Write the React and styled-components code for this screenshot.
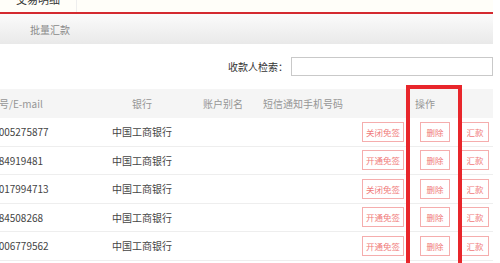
import React from 'react';
import styled, { createGlobalStyle } from 'styled-components';

const GlobalStyle = createGlobalStyle`
  html, body {
    margin: 0;
    padding: 0;
    background: #fff;
    font-family: "Noto Sans CJK SC", "Noto Sans", sans-serif;
  }
`;

const Screen = styled.div`
  position: relative;
  width: 500px;
  height: 263px;
  overflow: hidden;
  background: #fff;
`;

const Page = styled.div`
  margin: -15px 0 0 -28px;
  width: 521px;
`;

const TabRow = styled.div`
  display: flex;
  height: 27px;
  border-bottom: 2px solid #d42a30;
  background: #fffef9;
`;

const Tab = styled.div`
  width: 105px;
  padding-left: 28px;
  box-sizing: border-box;
  display: flex;
  align-items: center;
  justify-content: center;
  border-right: 1px solid #eee;
  font-size: 11px;
  color: #333;
`;

const SubBar = styled.div`
  height: 30px;
  display: flex;
  align-items: center;
  padding-left: 58px;
  background: linear-gradient(#fbfbfb, #e9e9e9);
  font-size: 10px;
  color: #8a8a8a;
`;

const SearchRow = styled.div`
  height: 45px;
  display: flex;
  align-items: center;
  justify-content: flex-end;
  gap: 3px;
`;

const SearchLabel = styled.span`
  font-size: 10px;
  color: #333;
`;

const SearchInput = styled.input`
  width: 202px;
  height: 19px;
  box-sizing: border-box;
  border: 1px solid #c9c9c9;
  padding: 0 4px;
  outline: none;
`;

const Grid = styled.div`
  display: grid;
  grid-template-columns: 128px 84px 78px 82px 149px;
`;

const Row = styled.div`
  display: contents;
`;

const Cell = styled.div`
  height: ${(p) => (p.$head ? '29px' : '28.5px')};
  box-sizing: border-box;
  display: flex;
  align-items: center;
  justify-content: ${(p) => (p.$left ? 'flex-start' : 'center')};
  padding-left: ${(p) => p.$pl || 0}px;
  white-space: nowrap;
  font-size: 10px;
  color: ${(p) => (p.$head ? '#959595' : '#444')};
  background: ${(p) => (p.$head ? '#f5f5f5' : '#fff')};
  border-bottom: ${(p) => (p.$head ? 'none' : '1px solid #eeeeee')};
`;

const Btn = styled.span`
  width: ${(p) => p.$w}px;
  height: 20px;
  margin-left: ${(p) => p.$ml || 0}px;
  box-sizing: border-box;
  display: inline-flex;
  align-items: center;
  justify-content: center;
  border: 1px solid #f5adad;
  color: #f07a7a;
  font-size: 8.5px;
  background: #fff;
`;

const Highlight = styled.div`
  position: absolute;
  left: 406px;
  top: 85px;
  width: 56px;
  height: 200px;
  box-sizing: border-box;
  border: 4px solid #e8262b;
  pointer-events: none;
`;

const rows = [
  { acct: '622005275877', free: '关闭免签' },
  { acct: '13584919481', free: '开通免签' },
  { acct: '622017994713', free: '关闭免签' },
  { acct: '13584508268', free: '开通免签' },
  { acct: '622006779562', free: '开通免签' },
];

export default function App() {
  return (
    <Screen>
      <GlobalStyle />
      <Page>
        <TabRow>
          <Tab>交易明细</Tab>
        </TabRow>
        <SubBar>批量汇款</SubBar>
        <SearchRow>
          <SearchLabel>收款人检索：</SearchLabel>
          <SearchInput type="text" />
        </SearchRow>
        <Grid>
          <Row>
            <Cell $head $left $pl={17}>账号/E-mail</Cell>
            <Cell $head>银行</Cell>
            <Cell $head>账户别名</Cell>
            <Cell $head>短信通知手机号码</Cell>
            <Cell $head $left $pl={71}>操作</Cell>
          </Row>
          {rows.map((r) => (
            <Row key={r.acct}>
              <Cell $left $pl={10}>{r.acct}</Cell>
              <Cell>中国工商银行</Cell>
              <Cell></Cell>
              <Cell></Cell>
              <Cell $left $pl={18}>
                <Btn $w={42}>{r.free}</Btn>
                <Btn $w={30} $ml={16}>删除</Btn>
                <Btn $w={28} $ml={11}>汇款</Btn>
              </Cell>
            </Row>
          ))}
        </Grid>
      </Page>
      <Highlight />
    </Screen>
  );
}
